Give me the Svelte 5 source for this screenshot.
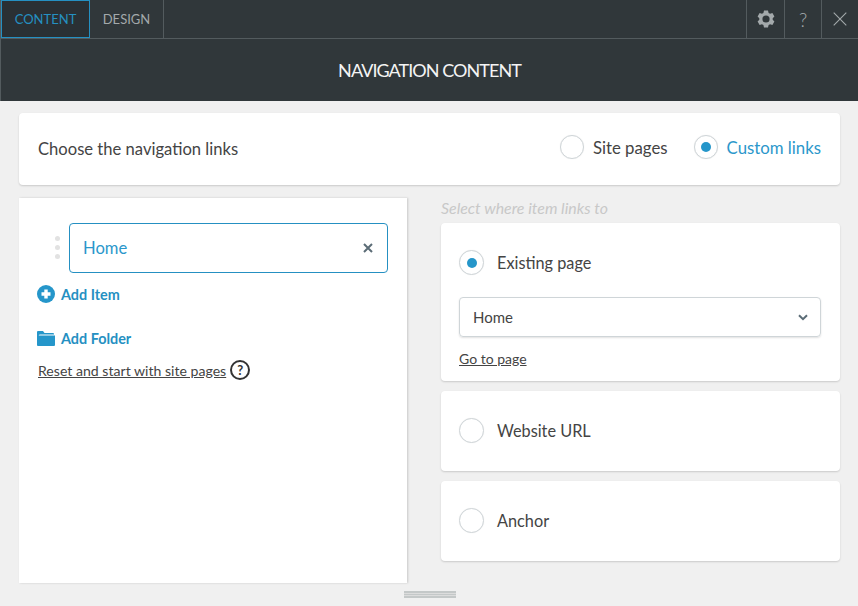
<script>
  const options = [
    { label: 'Website URL', h: 'short' },
    { label: 'Anchor', h: 'short' }
  ];
</script>

<div class="app">
  <header class="topbar">
    <nav class="tabs">
      <button class="tab active">CONTENT</button>
      <button class="tab">DESIGN</button>
    </nav>
    <div class="tools">
      <button class="tool gear" aria-label="Settings">
        <svg width="18" height="18" viewBox="0 0 18 18"><path fill-rule="evenodd" fill="#a3a9ab" d="M7 .6h4l.6 2.3 1.5.9 2.3-.7 2 3.5-1.7 1.6v1.6l1.7 1.6-2 3.5-2.3-.7-1.5.9-.6 2.3H7l-.6-2.3-1.5-.9-2.3.7-2-3.5 1.7-1.6V8.2L.6 6.6l2-3.5 2.3.7 1.5-.9zM9 5.4a3.6 3.6 0 1 0 0 7.2 3.6 3.6 0 0 0 0-7.2z"/></svg>
      </button>
      <button class="tool help">?</button>
      <button class="tool" aria-label="Close">
        <svg width="14" height="14" viewBox="0 0 14 14"><path d="M.7.7l12.6 12.6M13.3.7L.7 13.3" stroke="#a3a9ab" stroke-width="1.1" fill="none"/></svg>
      </button>
    </div>
  </header>
  <div class="titlebar">NAVIGATION CONTENT</div>

  <main class="body">
    <section class="card choose">
      <span class="choose-text">Choose the navigation links</span>
      <div class="choices">
        <label class="choice"><span class="radio"></span><span>Site pages</span></label>
        <label class="choice on"><span class="radio checked"></span><span>Custom links</span></label>
      </div>
    </section>

    <div class="columns">
      <section class="list-panel">
        <div class="item-row">
          <span class="grip"><i></i><i></i><i></i></span>
          <div class="item">
            <span>Home</span>
            <svg width="10" height="10" viewBox="0 0 10 10"><path d="M1 1l8 8M9 1l-8 8" stroke="#5b6c76" stroke-width="2" fill="none"/></svg>
          </div>
        </div>
        <button class="add add-item">
          <svg width="18" height="18" viewBox="0 0 18 18"><circle cx="9" cy="9" r="9" fill="#2596ca"/><path d="M9 4.5v9M4.5 9h9" stroke="#fff" stroke-width="3.4"/></svg>
          Add Item
        </button>
        <button class="add add-folder">
          <svg width="18" height="15" viewBox="0 0 18 15"><path fill="#2596ca" d="M1 0h5l1.5 2H16a1 1 0 0 1 1 1v.6H2.6L0 6V1a1 1 0 0 1 1-1zM1.5 4.4H18V14a1 1 0 0 1-1 1H1a1 1 0 0 1-1-1V6z"/></svg>
          Add Folder
        </button>
        <div class="reset">
          <a href="#reset">Reset and start with site pages</a>
          <span class="qmark">?</span>
        </div>
      </section>

      <section class="link-col">
        <p class="hint">Select where item links to</p>
        <div class="card option existing">
          <label class="choice big"><span class="radio checked"></span><span>Existing page</span></label>
          <div class="select">
            <span>Home</span>
            <svg width="10" height="7" viewBox="0 0 10 7"><path d="M1 1.2l4 4 4-4" stroke="#5b6c76" stroke-width="2" fill="none"/></svg>
          </div>
          <a class="goto" href="#go">Go to page</a>
        </div>
        {#each options as o}
          <div class="card option short">
            <label class="choice big"><span class="radio"></span><span>{o.label}</span></label>
          </div>
        {/each}
      </section>
    </div>
  </main>
  <div class="resize"></div>
</div>

<style>
  :global(body) { margin: 0; background: #f0f0f0; }
  .app {
    width: 858px; height: 606px; overflow: hidden; position: relative;
    font-family: "Lato", "Open Sans", sans-serif; color: #444; background: #f0f0f0;
  }
  button { font: inherit; background: none; border: 0; padding: 0; cursor: pointer; }
  .topbar {
    height: 38px; display: flex; justify-content: space-between;
    background: #30373a; border-bottom: 1px solid #535b5e; border-left: 1px solid #535b5e;
  }
  .tabs, .tools { display: flex; }
  .tab {
    width: 74px; font-size: 13px; color: #a3a9ab; border-right: 1px solid #535b5e;
  }
  .tab.active {
    width: 89px; margin-left: 0; color: #2590c2; background: #2a3034;
    border: 1px solid #2590c2;
  }
  .tab:not(.active) { width: 74px; }
  .tool {
    width: 37px; display: flex; align-items: center; justify-content: center;
    border-left: 1px solid #535b5e; color: #a3a9ab; font-size: 19px; font-weight: 300;
  }
  .tool.gear { width: 38px; }
  .titlebar {
    height: 62px; display: flex; align-items: center; justify-content: center;
    background: #30373a; color: #f4f4f4; font-size: 18px; letter-spacing: -0.95px; border-left: 1px solid #535b5e;
  }
  .body { padding: 12px 18px 0 19px; }
  .card {
    background: #fff; border-radius: 4px; box-shadow: 0 1px 2px rgba(0,0,0,.16);
  }
  .choose {
    height: 72px; display: flex; justify-content: space-between; align-items: center;
    padding: 0 19px;
  }
  .choose-text { font-size: 16.6px; margin-top: -1px; }
  .choices { display: flex; gap: 26px; margin-top: -4px; }
  .choice { display: flex; align-items: center; gap: 9px; font-size: 16.8px; }
  .choice.on { color: #2b97cb; }
  .choice.big { gap: 13px; font-size: 16.3px; }
  .radio {
    width: 24px; height: 24px; border-radius: 50%; border: 1px solid #cfd5d8;
    box-sizing: border-box; display: flex; align-items: center; justify-content: center;
    background: #fff; box-shadow: 0 0 1px rgba(0,0,0,.1);
  }
  .big .radio { width: 25px; height: 25px; }
  .radio.checked::after {
    content: ""; width: 10px; height: 10px; border-radius: 50%; background: #2596ca;
  }
  .columns { display: flex; margin-top: 13px; gap: 34px; }
  .list-panel {
    width: 388px; height: 385px; background: #fff; box-sizing: border-box;
    padding: 25px 19px 0; box-shadow: 1px 0 2px rgba(0,0,0,.16);
  }
  .item-row { display: flex; align-items: center; }
  .grip { width: 32px; display: flex; flex-direction: column; align-items: center; gap: 4px; margin-left: -1px; padding-left: 8px; box-sizing: border-box; margin-top: -2px; }
  .grip i { width: 5px; height: 5px; border-radius: 50%; background: #e2e2e2; display: block; }
  .item {
    flex: 1; height: 50px; box-sizing: border-box; border: 1px solid #2590c2; border-radius: 4px;
    display: flex; align-items: center; justify-content: space-between;
    padding: 0 14px 0 13px; font-size: 16.6px; color: #2b97cb;
  }
  .item span { margin-top: -1px; }
  .add {
    display: flex; align-items: center; gap: 6px; color: #2590c2; font-weight: 700; font-size: 14.4px; margin-left: -1px;
  }
  .add-item { margin-top: 12px; height: 18px; }
  .add-folder { margin-top: 26px; height: 18px; }
  .reset { display: flex; align-items: center; gap: 4px; margin-top: 13px; font-size: 14px; }
  .reset a { font-size: 14.1px; }
  .reset a, .goto { color: #444; text-decoration: underline; }
  .goto { font-size: 14px; }
  .qmark {
    width: 20px; height: 20px; box-sizing: border-box; border: 2px solid #333; border-radius: 50%;
    display: flex; align-items: center; justify-content: center; font-weight: 700; font-size: 13px; color: #333;
  }
  .link-col { width: 399px; display: flex; flex-direction: column; }
  .hint {
    margin: 0; height: 25px; font-size: 15.9px; font-style: italic; color: #c8c8c8; line-height: 20px;
  }
  .option { box-sizing: border-box; padding: 0 18px; margin-bottom: 10px; }
  .existing { height: 158px; padding-top: 27px; }
  .short { height: 80px; display: flex; align-items: center; }
  .short .choice { margin-top: -1px; }
  .select {
    margin-top: 22px; width: 362px; height: 40px; box-sizing: border-box; border: 1px solid #cfd5d8;
    border-radius: 4px; display: flex; align-items: center; justify-content: space-between;
    padding: 0 12px 0 13px; font-size: 15px; box-shadow: 0 1px 2px rgba(0,0,0,.12);
  }
  .goto { display: block; margin-top: 13px; }
  .resize {
    position: absolute; left: 404px; top: 591px; width: 52px; height: 7px;
    background: linear-gradient(#c4c8c8 0 2px, #dcdcdc 2px 3px, #c4c8c8 3px 4px, #dcdcdc 4px 5px, #c4c8c8 5px);
  }
</style>
